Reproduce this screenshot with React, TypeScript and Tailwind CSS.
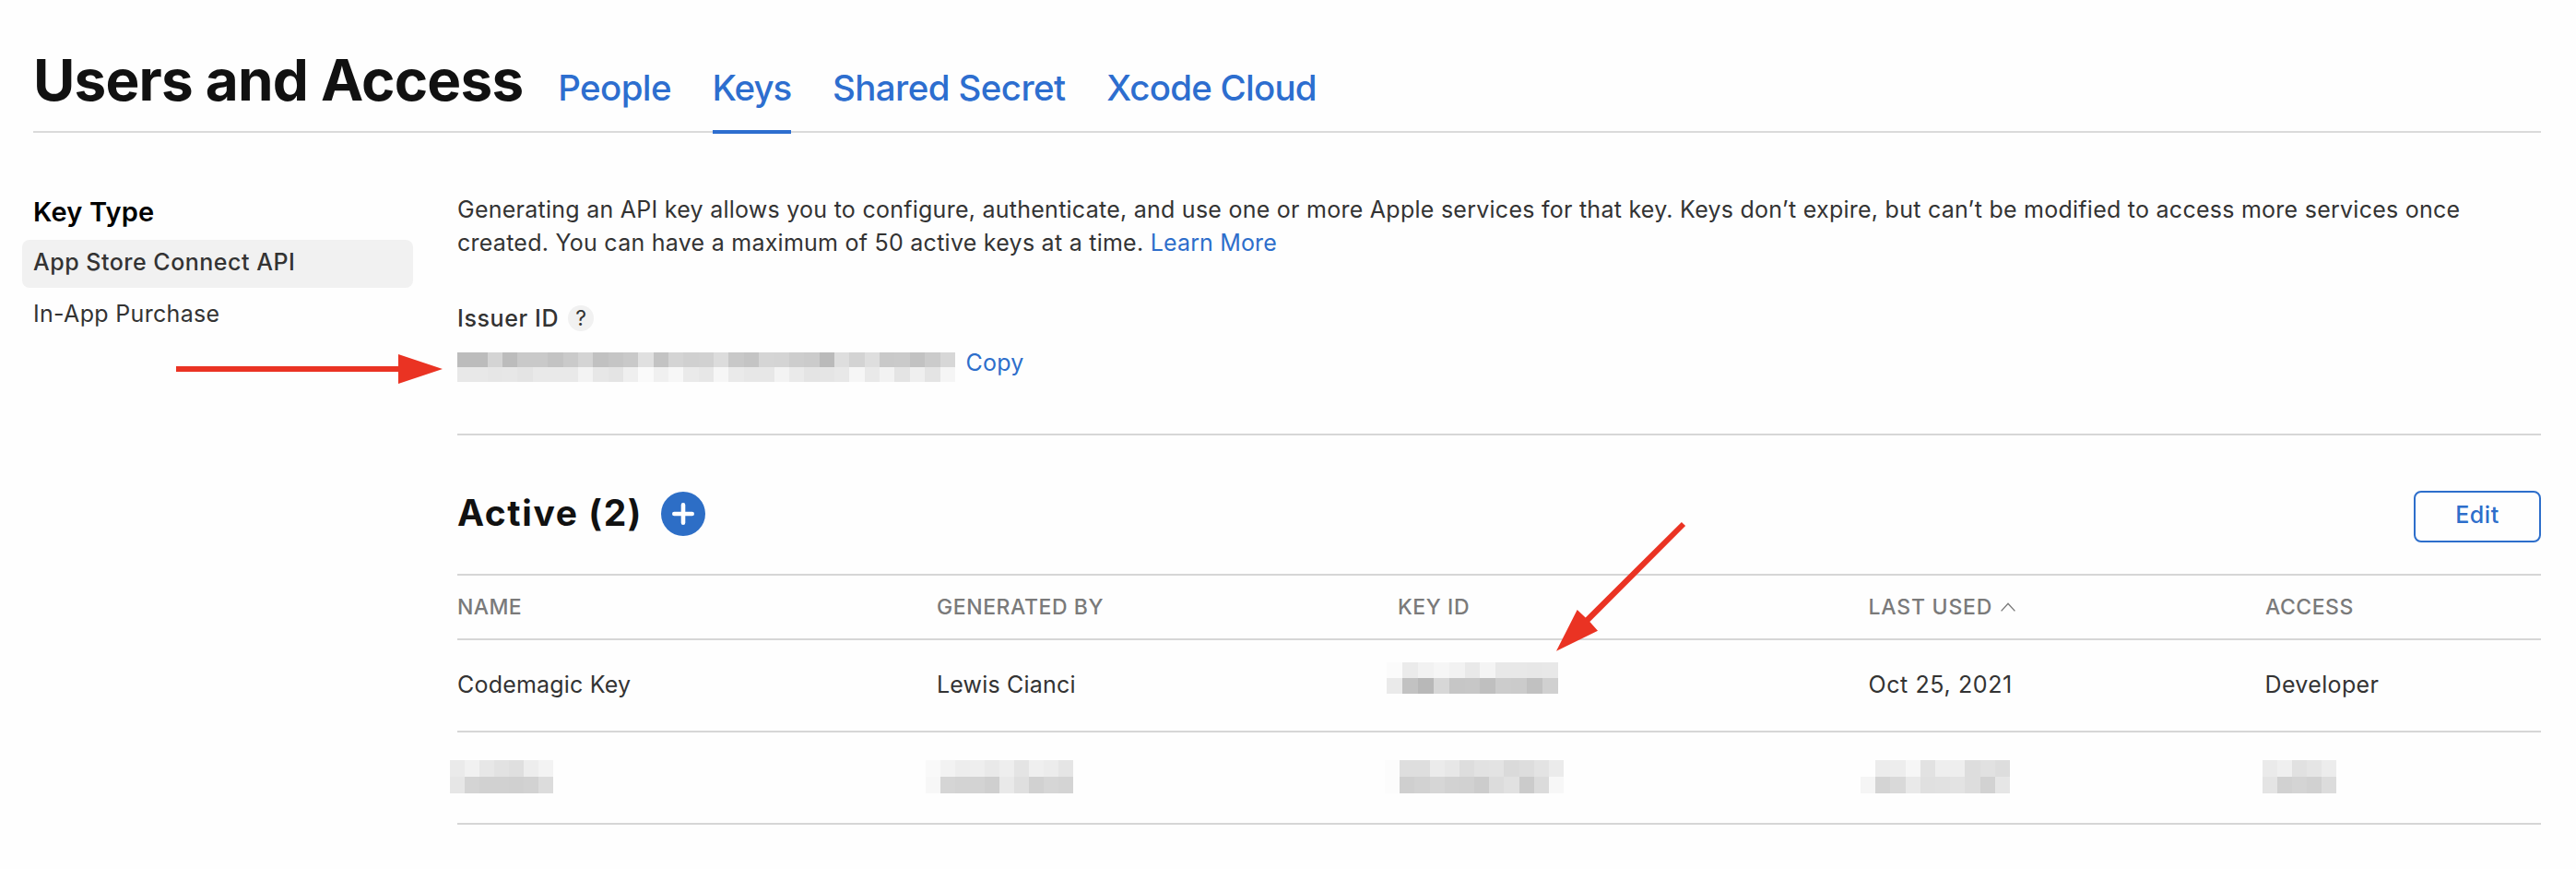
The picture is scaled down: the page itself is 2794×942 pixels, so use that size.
import type { ReactNode } from "react";

type MosaicProps = { rows: string[]; className: string };

/** Pixelated block that hides a private value; each pair of hex digits is one grey cell. */
function Mosaic({ rows, className }: MosaicProps) {
  return (
    <div className={`flex shrink-0 flex-col ${className}`} aria-hidden="true">
      {rows.map((row, i) => (
        <div key={i} className="flex flex-1">
          {row.split(" ").map((g, j) => (
            <div key={j} className="flex-1" style={{ backgroundColor: `#${g}${g}${g}` }} />
          ))}
        </div>
      ))}
    </div>
  );
}

const issuer = [
  "bc bc d4 bc c9 c9 c3 ca d4 c1 c5 c9 e0 c3 d4 d0 d1 dc c8 c4 d5 d4 cd cb ba de d3 de c9 ca c2 cb d7",
  "e8 e8 e6 e7 e4 e9 e9 e9 f3 e7 e4 ef fa f0 f7 ea e7 f6 ea e7 e7 f3 ea e4 e5 e8 f6 e9 f2 e4 ef e4 f5",
];
const keyId = ["fb eb f2 f6 f2 e9 f4 e8 e8 e7 e8", "ea c2 b8 d7 c6 c7 bf cc cb c1 d0"];
const hidden = {
  name: ["ea f1 e7 e2 df ed f3", "e6 d4 d1 d1 d0 d2 dc"],
  generatedBy: ["f9 f2 ed ee e9 ee e4 ef ec e5", "f7 d5 d3 d3 cf e9 df d1 d6 d4"],
  keyId: ["fc de de eb e7 dd e2 e3 da dd e3 eb", "fc cf d2 d6 d2 d1 cc dc e1 cb db f7"],
  lastUsed: ["fe ec ed f6 e2 ee ee dd e1 dd", "f5 d4 d9 e9 e0 e1 e3 dd d2 e6"],
  access: ["ea ef e1 e5 ec", "e4 d1 d4 d1 dc"],
};

const tabs = [
  { label: "People", tracking: "tracking-[-0.64px]" },
  { label: "Keys", tracking: "tracking-[-1px]", active: true },
  { label: "Shared Secret", tracking: "tracking-[-0.6px]" },
  { label: "Xcode Cloud", tracking: "tracking-[-0.78px]" },
];

const columns = "grid grid-cols-[520px_500px_510px_430px_300px]";

function Row({ children, className }: { children: ReactNode; className: string }) {
  return <div className={`${columns} border-b-2 border-[#d6d6d6] ${className}`}>{children}</div>;
}

export default function App() {
  return (
    <div className="relative h-[942px] w-[2794px] overflow-hidden bg-[#fefefe] font-['Inter','Liberation_Sans',sans-serif] text-[25px] text-[#333]">
      <header className="mr-[38px] ml-9 flex h-[144px] items-baseline border-b-2 border-[#dadada] pt-[50px]">
        <h1 className="text-[62px] leading-[73px] font-bold tracking-[-0.81px] whitespace-nowrap text-[#111]">
          Users and Access
        </h1>
        <nav className="ml-[38px] flex gap-[44.7px] text-[38.5px] leading-[46px] font-medium whitespace-nowrap text-[#2d6ecf]">
          {tabs.map((t) => (
            <a key={t.label} className={`relative ${t.tracking}`}>
              {t.label}
              {t.active && <span className="absolute inset-x-0 top-[69px] h-1 bg-[#2d6ecf]" />}
            </a>
          ))}
        </nav>
      </header>

      <div className="flex">
        <aside className="ml-6 w-[424px] pt-[68px]">
          <h2 className="mb-[13px] pl-3 text-[29px] leading-[35px] font-semibold tracking-[0.18px] text-black">
            Key Type
          </h2>
          <div className="flex flex-col gap-1">
            <a className="flex h-[52px] items-center rounded-lg bg-[#f1f1f1] pb-0.5 pl-3 font-medium tracking-[0.5px]">
              App Store Connect API
            </a>
            <a className="flex h-[52px] items-center pb-0.5 pl-3 tracking-[0.32px]">In-App Purchase</a>
          </div>
        </aside>

        <main className="ml-12 w-[2260px] pt-[65px]">
          <p className="leading-9 tracking-[0.255px] whitespace-nowrap">
            Generating an API key allows you to configure, authenticate, and use one or more Apple services for that
            key. Keys don’t expire, but can’t be modified to access more services once
            <br />
            created. You can have a maximum of 50 active keys at a time.{" "}
            <a className="tracking-[0.15px] text-[#2d6ecb]">Learn More</a>
          </p>

          <div className="mt-[50px] flex h-7 items-center">
            <span className="leading-7 font-medium tracking-[0.6px]">Issuer ID</span>
            <span className="ml-[10px] flex size-7 items-center justify-center rounded-full bg-[#f1f1f1] text-[23px] leading-7">
              ?
            </span>
          </div>

          <div className="mt-[19px] flex h-[92px] items-start">
            <Mosaic rows={issuer} className="mt-1 h-8 w-[540px]" />
            <a className="ml-[11.5px] leading-[30px] tracking-[0.2px] text-[#2d6ecb]">Copy</a>
          </div>

          <section className="border-t-2 border-[#d6d6d6]">
            <div className="flex h-[150px] items-start justify-between">
              <div className="flex pt-[59px]">
                <h2 className="w-[204px] text-[39px] leading-[49px] font-bold tracking-[1.6px] whitespace-nowrap text-[#111]">
                  Active (2)
                </h2>
                <button className="mt-0.5 ml-[17px] flex size-12 items-center justify-center rounded-full bg-[#2d6ec6]">
                  <svg viewBox="0 0 24 24" className="size-6" stroke="#fff" strokeWidth="4.6" strokeLinecap="round">
                    <path d="M12 2.3v19.4M2.3 12h19.4" />
                  </svg>
                </button>
              </div>
              <button className="mt-[60px] flex h-14 w-[138px] items-center justify-center rounded-lg border-2 border-[#2d6ecb] pb-0.5 font-medium tracking-[0.59px] text-[#2d6ecb]">
                Edit
              </button>
            </div>

            <div className="border-t-2 border-[#d6d6d6]">
              <Row className="h-[70px] items-center text-[23px] font-medium tracking-[0.56px] whitespace-nowrap text-[#7a7a7a]">
                <span className="tracking-[0.37px]">NAME</span>
                <span>GENERATED BY</span>
                <span>KEY ID</span>
                <span className="flex items-center pl-[0.5px] tracking-[0.78px]">
                  LAST USED
                  <svg viewBox="0 0 16 10" className="ml-[9px] h-[10px] w-4" fill="none" stroke="#7a7a7a" strokeWidth="1.4">
                    <path d="M0.6 9.4L8 1.2L15.4 9.4" />
                  </svg>
                </span>
                <span className="pl-px tracking-[0.5px]">ACCESS</span>
              </Row>
              <Row className="h-[100px] items-center whitespace-nowrap">
                <span className="tracking-[0.2px]">Codemagic Key</span>
                <span className="tracking-[0.18px]">Lewis Cianci</span>
                <Mosaic rows={keyId} className="mb-4 -ml-3 h-[34px] w-[186px]" />
                <span className="pl-[0.5px] tracking-[0.6px]">Oct 25, 2021</span>
                <span className="pl-[0.5px] tracking-[0.35px]">Developer</span>
              </Row>
              <Row className="h-[100px] items-start pt-[30px]">
                <Mosaic rows={hidden.name} className="-ml-2 h-9 w-28" />
                <Mosaic rows={hidden.generatedBy} className="-ml-3 h-9 w-40" />
                <Mosaic rows={hidden.keyId} className="-ml-[14px] h-9 w-[194px]" />
                <Mosaic rows={hidden.lastUsed} className="-ml-2 h-9 w-[162px]" />
                <Mosaic rows={hidden.access} className="-ml-0.5 h-9 w-20" />
              </Row>
            </div>
          </section>
        </main>
      </div>

      {/* Annotation arrows drawn over the page */}
      <svg className="pointer-events-none absolute inset-0" width="2794" height="942" fill="#ea3323">
        <path d="M191 397H432V384L480 400L432 416V403H191Z" />
        <path d="M1823.9 565.9L1828.1 570.1L1724.3 674.1L1733 683.7L1688 705.8L1710.7 661L1719.7 669.6Z" />
      </svg>
    </div>
  );
}
